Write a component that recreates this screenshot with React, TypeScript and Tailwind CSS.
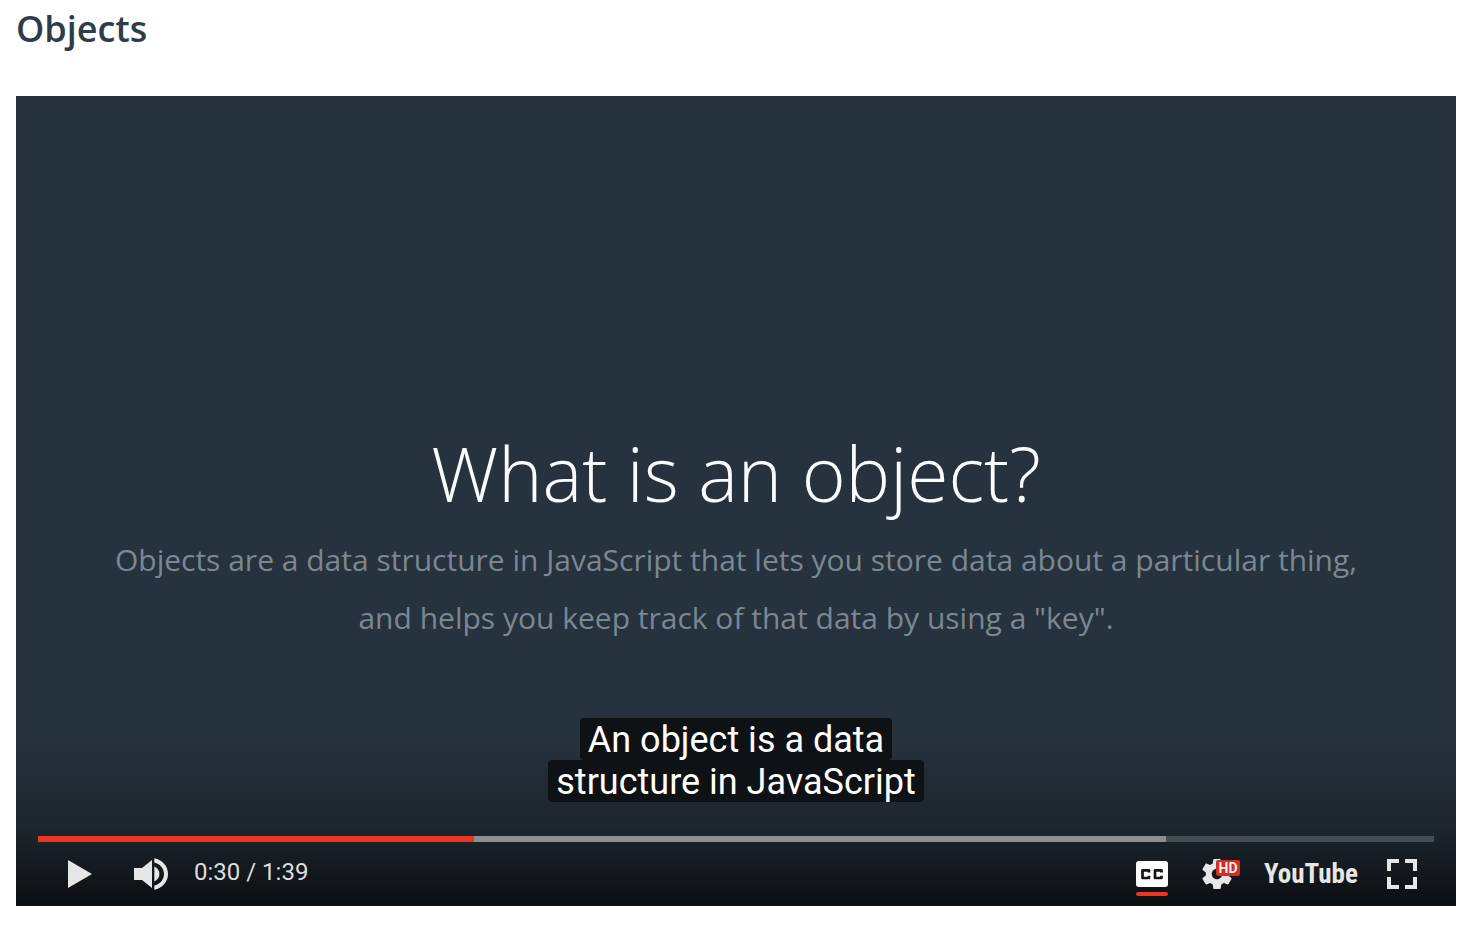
import React from "react";

function PlayIcon() {
  return (
    <svg className="h-7 w-6" viewBox="0 0 24 28" fill="#e6e6e6" aria-hidden="true">
      <path d="M0 0L24 14L0 28Z" />
    </svg>
  );
}

function VolumeIcon() {
  return (
    <svg className="h-8 w-[34px]" viewBox="0 0 34 32" fill="#e6e6e6" aria-hidden="true">
      <path d="M0 10H8L18 2V30L8 22H0Z" />
      <path d="M20.3 8.5C23.4 9.8 25.4 12.6 25.4 16S23.4 22.2 20.3 23.5Z" />
      <path d="M20.3 0.3C28.2 1.6 34 8.1 34 16S28.2 30.4 20.3 31.7V27.6C26 26.3 30 21.6 30 16S26 5.7 20.3 4.4Z" />
    </svg>
  );
}

function CaptionsIcon() {
  return (
    <svg className="h-[26px] w-8" viewBox="0 0 32 26" aria-hidden="true">
      <rect width="32" height="26" rx="3" fill="#fff" />
      <path
        d="M13 11.5V9.3H6.5V17H13V14.8M25.5 11.5V9.3H19V17H25.5V14.8"
        fill="none"
        stroke="#11171c"
        strokeWidth="2.7"
        strokeLinejoin="round"
      />
    </svg>
  );
}

function GearIcon() {
  return (
    <svg className="size-[30px]" viewBox="2 2 20 20" fill="#e6e6e6" aria-hidden="true">
      <path d="M19.43 12.98c.04-.32.07-.64.07-.98s-.03-.66-.07-.98l2.11-1.65c.19-.15.24-.42.12-.64l-2-3.46c-.12-.22-.39-.3-.61-.22l-2.49 1c-.52-.4-1.08-.73-1.69-.98l-.38-2.65C14.46 2.18 14.25 2 14 2h-4c-.25 0-.46.18-.49.42l-.38 2.65c-.61.25-1.17.59-1.69.98l-2.49-1c-.23-.09-.49 0-.61.22l-2 3.46c-.13.22-.07.49.12.64l2.11 1.65c-.04.32-.07.65-.07.98s.03.66.07.98l-2.11 1.65c-.19.15-.24.42-.12.64l2 3.46c.12.22.39.3.61.22l2.49-1c.52.4 1.08.73 1.69.98l.38 2.65c.03.24.24.42.49.42h4c.25 0 .46-.18.49-.42l.38-2.65c.61-.25 1.17-.59 1.69-.98l2.49 1c.23.09.49 0 .61-.22l2-3.46c.12-.22.07-.49-.12-.64l-2.11-1.65zM12 15.5c-1.93 0-3.5-1.57-3.5-3.5s1.57-3.5 3.5-3.5 3.5 1.57 3.5 3.5-1.57 3.5-3.5 3.5z" />
    </svg>
  );
}

function FullscreenIcon() {
  return (
    <svg className="size-[30px]" viewBox="0 0 30 30" fill="none" stroke="#e6e6e6" strokeWidth="4" aria-hidden="true">
      <path d="M2 12V2H12M18 2H28V12M28 18V28H18M12 28H2V18" />
    </svg>
  );
}

export default function App() {
  return (
    <main className="bg-white pt-1 pr-6 pb-9 pl-4 font-['Open_Sans',sans-serif]">
      <h1 className="mb-[42px] text-[36px] leading-[50px] font-semibold text-[#2e3d49]">Objects</h1>

      <section aria-label="Video player" className="grid aspect-video w-full overflow-hidden bg-[#26323d]">
        <div className="col-start-1 row-start-1 flex flex-col items-center pt-[23%] text-center">
          <h2 className="mb-3 text-[75px] leading-[92px] font-light text-[#fafdff]">What is an object?</h2>
          <p className="text-[30px] leading-[58px] text-[#7b8792]">
            Objects are a data structure in JavaScript that lets you store data about a particular thing,
            <br />
            and helps you keep track of that data by using a "key".
          </p>
        </div>

        <div className="z-10 col-start-1 row-start-1 flex flex-col justify-end bg-linear-to-t from-[#0c0f12] from-0% via-[#1d262f] via-10% to-transparent to-22% font-[Roboto,sans-serif]">
          <div className="mb-[34px] flex flex-col items-center text-[36px] leading-10 text-white">
            <span className="rounded bg-[#0f1215] px-2 pt-0.5">An object is a data</span>
            <span className="rounded bg-[#0f1215] px-2 pt-0.5">structure in JavaScript</span>
          </div>

          <div
            role="progressbar"
            aria-label="Playback position"
            aria-valuemin={0}
            aria-valuemax={99}
            aria-valuenow={30}
            className="mx-[22px] flex h-1.5 bg-[#454c53]"
          >
            <div className="w-[31.2%] bg-[#ef3323]" />
            <div className="w-[49.6%] bg-[#8b8f92]" />
          </div>

          <div className="flex h-16 items-center justify-between pr-[39px] pl-[52px]">
            <div className="flex items-center">
              <button type="button" aria-label="Play" className="mr-[42px]">
                <PlayIcon />
              </button>
              <button type="button" aria-label="Mute" className="mr-[26px]">
                <VolumeIcon />
              </button>
              <span className="pb-1 text-[24px] leading-7 text-[#dddddd]">0:30 / 1:39</span>
            </div>
            <div className="flex items-center">
              <button type="button" aria-label="Captions" className="relative mr-[34px]">
                <CaptionsIcon />
                <span className="absolute top-[31px] left-0 h-1 w-8 rounded-full bg-[#ef3323]" />
              </button>
              <button type="button" aria-label="Settings" className="relative mr-8">
                <GearIcon />
                <span className="absolute top-px left-3.5 h-4 w-6 rounded-xs bg-[#d62d20] text-center text-[14px] leading-4 font-bold text-[#eeeeee]">
                  HD
                </span>
              </button>
              <a
                href="#youtube"
                className="mr-[29px] w-[94px] text-[27px] leading-8 font-bold text-[#e6e6e6] font-['Liberation_Sans_Narrow','Roboto_Condensed','Open_Sans_Condensed',Roboto,sans-serif]"
              >
                YouTube
              </a>
              <button type="button" aria-label="Full screen">
                <FullscreenIcon />
              </button>
            </div>
          </div>
        </div>
      </section>
    </main>
  );
}
